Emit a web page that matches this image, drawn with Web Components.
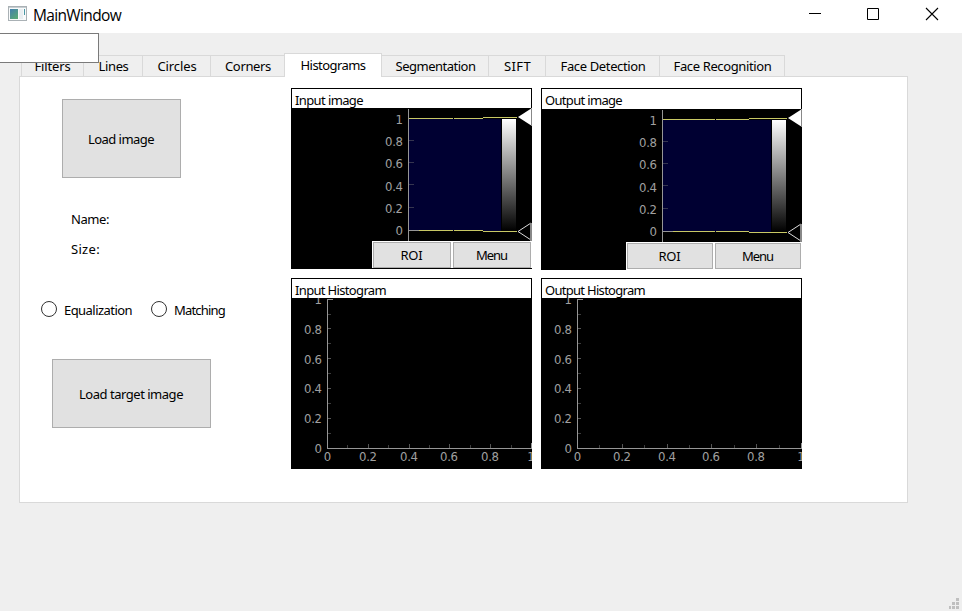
<!DOCTYPE html>
<html lang="en">
<head>
<meta charset="utf-8">
<title>MainWindow</title>
<style>
html,body{margin:0;width:962px;height:611px;overflow:hidden;background:#efefef;color:#000;font:13px/16px "Noto Sans","Open Sans",sans-serif}
</style>
</head>
<body>
<main-window></main-window>
<script>
class Base extends HTMLElement {
  connectedCallback() {
    if (this.shadowRoot) return;
    this.attachShadow({ mode: 'open' }).innerHTML = this.render();
    this.ready();
  }
  ready() {}
}

/* Text run whose tracking is tuned to a given width. */
customElements.define('fit-text', class extends Base {
  render() { return `<style>:host{display:block;white-space:nowrap;width:${this.getAttribute('w')}px;flex:none}span{display:inline-block}</style><span>${this.getAttribute('text')}</span>`; }
  ready() {
    const s = this.shadowRoot.querySelector('span'), n = s.textContent.length;
    const d = (+this.getAttribute('w') - s.getBoundingClientRect().width) / n;
    s.style.letterSpacing = d.toFixed(3) + 'px';
  }
});
const T = (t, w) => `<fit-text text="${t}" w="${w}"></fit-text>`;

customElements.define('push-button', class extends Base {
  render() { return `<style>:host{display:flex;align-items:center;justify-content:center;box-sizing:border-box;background:#e1e1e1;border:1px solid #adadad}</style><slot></slot>`; }
});

customElements.define('radio-option', class extends Base {
  render() { return `<style>:host{display:flex;align-items:flex-start}i{box-sizing:border-box;width:16px;height:16px;border:1px solid #333;border-radius:50%;background:#fff;margin-right:7px}div{padding-top:1px}</style><i></i><div><slot></slot></div>`; }
});

customElements.define('title-bar', class extends Base {
  render() { return `<style>
    :host{display:flex;height:33px;background:#fff;align-items:flex-start}
    .logo{margin:6px 6px 0 8px} .name{font:15.5px/20px "Open Sans","Noto Sans",sans-serif;padding-top:5px;flex:1}
    .ctl{margin-top:5px}
    </style>
    <svg class="logo" width="19" height="16" viewBox="0 0 19 16"><defs><linearGradient id="g" x2="0.7" y2="1"><stop stop-color="#437fae"/><stop offset="1" stop-color="#58a878"/></linearGradient></defs>
    <rect x=".5" y=".5" width="18" height="14" fill="#f8fafb" stroke="#aab1b5"/><path d="M1 1.5h17" stroke="#c6cdd1"/><rect x="2" y="3" width="8" height="10" fill="url(#g)"/><rect x="11" y="3" width="4" height="10" fill="#e9eef1"/><rect x="16" y="3" width="1" height="6" fill="#4b98a5"/></svg>
    <div class="name">${T('MainWindow', 88)}</div>
    <svg class="ctl" width="153" height="20" viewBox="0 0 153 20" fill="none" stroke="#000"><path d="M0 8.5h12M58.5 3.5h11v11h-11z"/><path d="M117 3l12 12M129 3l-12 12" stroke-width="1.1"/></svg>`; }
});

customElements.define('tab-item', class extends Base {
  render() { return `<style>
    :host{display:flex;justify-content:center;box-sizing:border-box;height:21px;padding:2px 0 0 1px;border:1px solid #d9d9d9;border-width:1px 1px 0 0;background:#efefef}
    :host([first]){border-left-width:1px;padding-left:0}
    :host([selected]){height:24px;padding:3px 0 0;background:#fff;border-left-width:1px;margin:0 0 -1px -1px}
    </style><slot></slot>`; }
});

/* Common frame: caption strip over a black plot area. */
customElements.define('plot-frame', class extends Base {
  render() { return `<style>
    :host{display:grid;align-content:start;position:relative}
    .cap{box-sizing:border-box;height:var(--cap,20px);background:#fff;border:1px solid #000;border-bottom:0;padding:3px 0 0 3px;overflow:hidden}
    </style><div class="cap">${T(this.getAttribute('caption'), this.getAttribute('cw'))}</div><slot></slot>`; }
});

const svgText = 'text{font:13px "DejaVu Sans Condensed","DejaVu Sans",sans-serif;font-stretch:condensed;fill:#a0a0a0}';
const num = (t, x, y, anchor) => `<text x="${x}" y="${y}" text-anchor="${anchor}" ${t.length > 1 ? 'textLength="18"' : ''}>${t}</text>`;

customElements.define('level-plot', class extends Base {
  render() {
    const a = k => +this.getAttribute(k), W = a('w'), ax = a('axis'), e = W - 15, bx = a('buttons'), m = a('mid'), s = a('step'), end = a('pad');
    const ys = [32, 54, 76, 99];
    return `<style>
    :host{display:block;position:relative;height:161px;width:${W}px}
    svg{display:block;background:#000} ${svgText}
    .bar{position:absolute;left:${bx}px;top:133px;right:0;box-sizing:border-box;height:${end}px;padding:1px 1px 0;background:#fff;display:grid;grid-template-columns:1fr 1fr;gap:2px}
    push-button{height:26px;padding-right:1px}
    </style>
    <svg width="${W}" height="161" shape-rendering="crispEdges"><defs><linearGradient id="v" x2="0" y2="1"><stop stop-color="#fff"/><stop offset="1" stop-color="#000"/></linearGradient></defs>
    <rect x="${ax}" y="11" width="${e - 16 - ax}" height="112" fill="#000032"/>
    <rect x="${e - 15}" y="11" width="14" height="112" fill="url(#v)"/>
    <path d="M${ax + .5} 1v132M${ax} 122.5h11" stroke="#969696"/>
    <path d="M${ax + 1} 10.5H${m}M${m + 1} 10.5H${s}M${s} 9.5H${e}M${ax + 11} 122.5H${m}M${m + 1} 122.5H${s}M${s} 123.5H${e}" stroke="#c8c864"/>
    <path d="${ys.map(y => `M${ax + 1} ${y + .5}h5`).join('')}" stroke="#35354f"/>
    ${['1', '0.8', '0.6', '0.4', '0.2', '0'].map((t, i) => num(t, ax - 5, [16, 38, 60, 83, 105, 127][i], 'end')).join('')}
    <path d="M${e + 1} 9L${W} 0V18Z" fill="#fff" shape-rendering="auto"/><path d="M${W - .5} 1v17" stroke="#888"/>
    <path d="M${e + 1} 123.5L${W - 1} 115M${e + 1} 123.5L${W - 1} 132" stroke="#ddd" fill="none" shape-rendering="auto"/><path d="M${W - 1} 115v18" stroke="#888" stroke-width="2"/>
    </svg>
    <div class="bar"><push-button>${T('ROI', 22)}</push-button><push-button>${T('Menu', 31)}</push-button></div>`;
  }
});

customElements.define('hist-plot', class extends Base {
  render() {
    const W = +this.getAttribute('w'), st = (W - 37) / 5, L = ['0', '0.2', '0.4', '0.6', '0.8', '1'];
    const X = i => Math.round(36 + st * i), Y = i => [150, 120, 90, 60, 30, 1][i];
    let major = '', minor = '', txt = '';
    for (let i = 0; i < 5; i++) {
      if (i) major += `M${X(i) + .5} 150v-4M37 ${Y(i) + .5}h3`;
      minor += `M${X(i + .5) + .5} 150v-3M37 ${Math.round((Y(i) + Y(i + 1)) / 2) + .5}h3`;
    }
    L.forEach((t, i) => { txt += num(t, 31, [155, 125, 95, 66, 36, 6][i], 'end') + num(t, X(i) + (i ? 0 : .5), 163, 'middle'); });
    return `<style>:host{display:block}svg{display:block;background:#000;overflow:hidden}${svgText}</style>
    <svg width="${W}" height="171" shape-rendering="crispEdges">
    <path d="${minor}" stroke="#3c3c3c"/><path d="${major}" stroke="#555"/>
    <path d="M36.5 1v150M36 150.5H${W}M36 1.5h6M${W - .5} 150v-5" stroke="#969696"/>${txt}</svg>`;
  }
});

customElements.define('main-window', class extends Base {
  render() {
    const tabs = [['Filters', 36, 63], ['Lines', 30, 59], ['Circles', 39, 68], ['Corners', 46, 74], ['Histograms', 65, 98], ['Segmentation', 80, 107], ['SIFT', 27, 57], ['Face Detection', 85, 114], ['Face Recognition', 98, 125]];
    return `<style>
    :host{display:flex;flex-direction:column;height:611px;position:relative;background:#efefef}
    .edit{position:absolute;left:-1px;top:33px;width:100px;height:30px;box-sizing:border-box;background:#fff;border:1px solid #7a7a7a}
    .tabs{display:flex;align-items:flex-end;height:23px;margin:20px 0 0 21px;position:relative}
    .pane{box-sizing:border-box;margin-left:19px;width:889px;height:427px;background:#fff;border:1px solid #d9d9d9;display:flex}
    .side{width:271px;flex:none;display:flex;flex-direction:column;align-items:flex-start}
    .load{width:119px;height:79px;margin:22px 0 0 42px;padding-right:1px}
    .name{margin:33px 0 0 51px}.size{margin:14px 0 0 51px}
    .radios{display:flex;margin:44px 0 0 21px;gap:19px}
    .target{width:159px;height:69px;margin:41px 0 0 32px;padding-right:1px}
    .plots{display:grid;grid-template-columns:241px 261px;column-gap:9px;grid-template-rows:190px 191px;margin-top:11px}
    .grip{position:absolute;right:3px;bottom:2px}
    </style>
    <title-bar></title-bar>
    <div class="tabs">${tabs.map((t, i) => `<tab-item ${i == 4 ? 'selected' : ''} ${i ? '' : 'first'} style="width:${t[2]}px">${T(t[0], t[1])}</tab-item>`).join('')}</div>
    <div class="pane">
      <div class="side">
        <push-button class="load">${T('Load image', 66)}</push-button>
        <div class="name">${T('Name:', 38)}</div><div class="size">${T('Size:', 29)}</div>
        <div class="radios"><radio-option>${T('Equalization', 68)}</radio-option><radio-option>${T('Matching', 51)}</radio-option></div>
        <push-button class="target">${T('Load target image', 104)}</push-button>
      </div>
      <div class="plots">
        <plot-frame caption="Input image" cw="68"><level-plot w="241" axis="117" mid="162" step="192" buttons="81" pad="27"></level-plot></plot-frame>
        <plot-frame caption="Output image" cw="77" style="--cap:21px"><level-plot w="261" axis="121" mid="174" step="208" buttons="85" pad="28"></level-plot></plot-frame>
        <plot-frame caption="Input Histogram" cw="91"><hist-plot w="241"></hist-plot></plot-frame>
        <plot-frame caption="Output Histogram" cw="100"><hist-plot w="261"></hist-plot></plot-frame>
      </div>
    </div>
    <div class="edit"></div>
    <svg class="grip" width="10" height="11" fill="#bfbfbf"><path d="M7 0h3v3h-3zM3 4h3v3h-3zM7 4h3v3h-3zM0 8h2v3h-2zM3 8h3v3h-3zM7 8h3v3h-3z"/></svg>`;
  }
});
</script>
</body>
</html>
